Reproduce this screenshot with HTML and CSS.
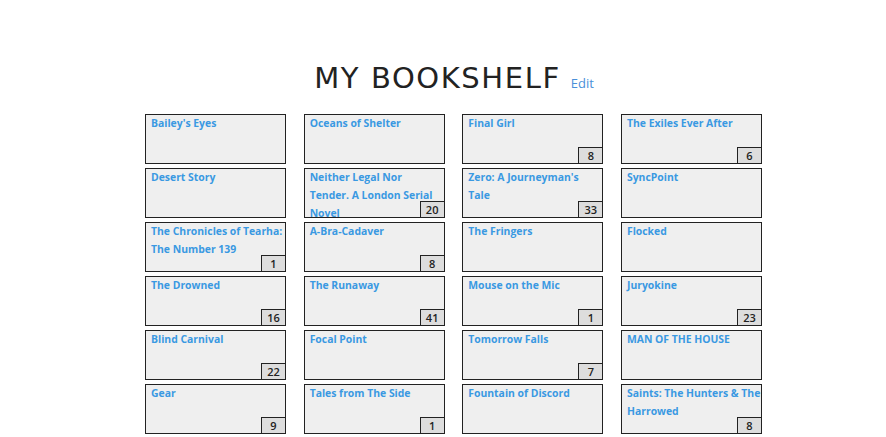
FILE: index.html
```html
<!DOCTYPE html>
<html>
<head>
<meta charset="utf-8">
<link rel="stylesheet" href="styles.css">
</head>
<body>
<div class="header">
  <h1 class="title">MY BOOKSHELF</h1>
  <a class="edit" href="#">Edit</a>
</div>
<div class="shelf">
  <div class="book"><a class="name" href="#">Bailey's Eyes</a></div>
  <div class="book"><a class="name" href="#">Oceans of Shelter</a></div>
  <div class="book"><a class="name" href="#">Final Girl</a><span class="count">8</span></div>
  <div class="book"><a class="name" href="#">The Exiles Ever After</a><span class="count">6</span></div>

  <div class="book"><a class="name" href="#">Desert Story</a></div>
  <div class="book"><a class="name" href="#">Neither Legal Nor<br>Tender. A London Serial Novel</a><span class="count">20</span></div>
  <div class="book"><a class="name" href="#">Zero: A Journeyman's<br>Tale</a><span class="count">33</span></div>
  <div class="book"><a class="name" href="#">SyncPoint</a></div>

  <div class="book"><a class="name" href="#">The Chronicles of Tearha: The Number 139</a><span class="count">1</span></div>
  <div class="book"><a class="name" href="#">A-Bra-Cadaver</a><span class="count">8</span></div>
  <div class="book"><a class="name" href="#">The Fringers</a></div>
  <div class="book"><a class="name" href="#">Flocked</a></div>

  <div class="book"><a class="name" href="#">The Drowned</a><span class="count">16</span></div>
  <div class="book"><a class="name" href="#">The Runaway</a><span class="count">41</span></div>
  <div class="book"><a class="name" href="#">Mouse on the Mic</a><span class="count">1</span></div>
  <div class="book"><a class="name" href="#">Juryokine</a><span class="count">23</span></div>

  <div class="book"><a class="name" href="#">Blind Carnival</a><span class="count">22</span></div>
  <div class="book"><a class="name" href="#">Focal Point</a></div>
  <div class="book"><a class="name" href="#">Tomorrow Falls</a><span class="count">7</span></div>
  <div class="book"><a class="name" href="#">MAN OF THE HOUSE</a></div>

  <div class="book"><a class="name" href="#">Gear</a><span class="count">9</span></div>
  <div class="book"><a class="name" href="#">Tales from The Side</a><span class="count">1</span></div>
  <div class="book"><a class="name" href="#">Fountain of Discord</a></div>
  <div class="book"><a class="name" href="#">Saints: The Hunters &amp; The Harrowed</a><span class="count">8</span></div>
</div>
</body>
</html>
```
FILE: styles.css
```css
html, body {
  margin: 0;
  padding: 0;
  background: #ffffff;
}

body {
  font-family: "Open Sans", "DejaVu Sans", sans-serif;
  overflow: hidden;
}

.header {
  display: flex;
  justify-content: center;
  align-items: baseline;
  gap: 10px;
  padding: 61px 0 0 22px;
}

.title {
  margin: 0;
  font-family: "DejaVu Sans", sans-serif;
  font-weight: normal;
  font-size: 29px;
  letter-spacing: 1.6px;
  line-height: 34px;
  color: #222222;
}

.edit {
  font-family: "Open Sans", sans-serif;
  font-size: 13px;
  color: #4a90d9;
  text-decoration: none;
}

.shelf {
  display: grid;
  grid-template-columns: repeat(4, 141px);
  grid-auto-rows: 50px;
  column-gap: 17.67px;
  row-gap: 4px;
  margin: 19px 0 0 145px;
}

.book {
  position: relative;
  box-sizing: border-box;
  border: 1px solid #222222;
  background: #efefef;
  padding: 0 0 0 5px;
  overflow: hidden;
}

.name {
  display: block;
  margin: -1px -3px 0 0;
  font-family: "Open Sans", sans-serif;
  font-weight: bold;
  font-size: 10.4px;
  line-height: 18px;
  color: #3a99e2;
  text-decoration: none;
}

.count {
  position: absolute;
  right: 0;
  bottom: 0;
  box-sizing: border-box;
  width: 24px;
  height: 16px;
  border-top: 1px solid #222222;
  border-left: 1px solid #222222;
  background: #dddddd;
  font-family: "Open Sans", sans-serif;
  font-weight: 600;
  font-size: 11px;
  line-height: 15px;
  text-align: center;
  color: #222222;
}
```
